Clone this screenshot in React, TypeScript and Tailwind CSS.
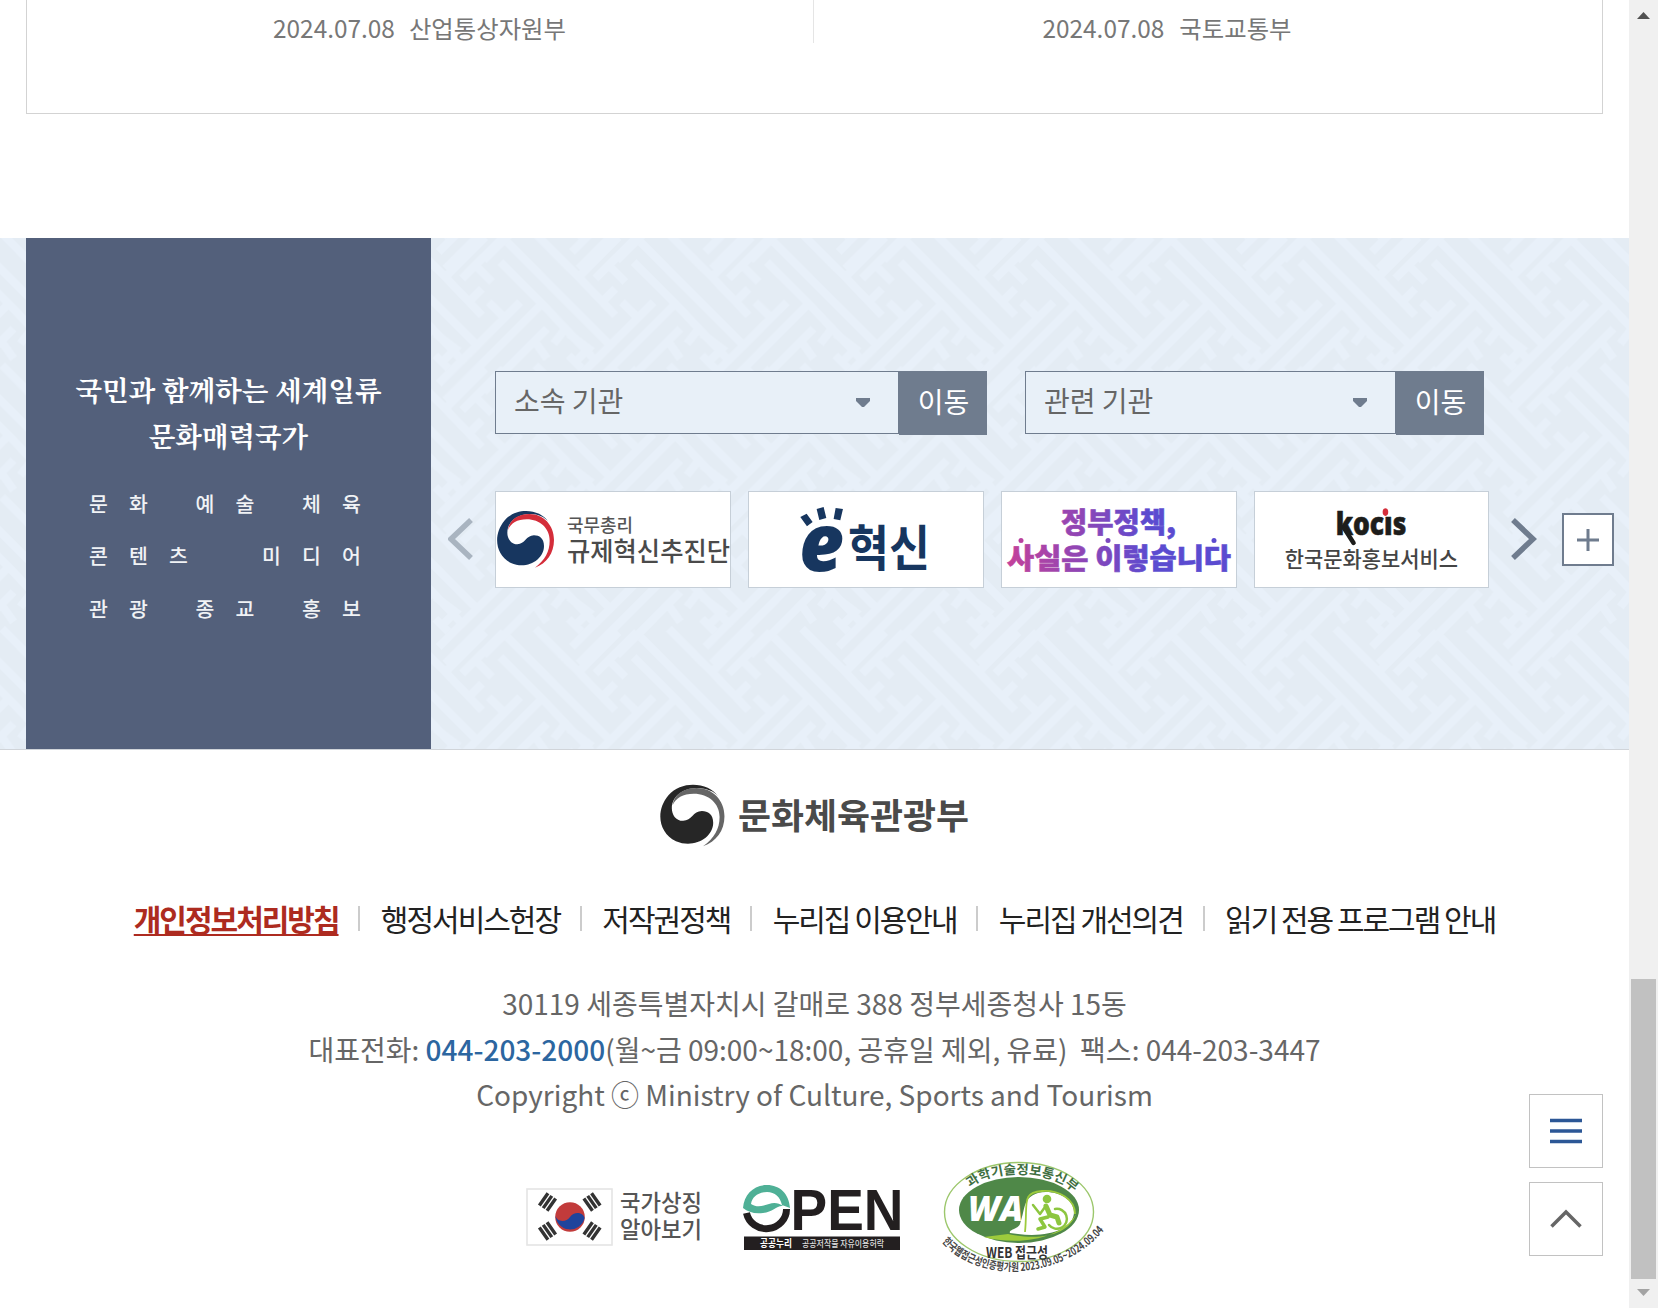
import React from 'react';

const KR = '"Noto Sans CJK KR", sans-serif';

type LabelProps = {
  x: number;
  y: number;
  w: number;
  size: number;
  weight?: number;
  fill?: string;
  italic?: boolean;
  family?: string;
  children: string;
};

/** Logo lettering fitted to an exact width. */
function Label({ x, y, w, size, weight = 700, fill = '#4a4a4a', italic, family = KR, children }: LabelProps) {
  return (
    <text
      x={x}
      y={y}
      textLength={w}
      lengthAdjust="spacingAndGlyphs"
      fontSize={size}
      fontWeight={weight}
      fontStyle={italic ? 'italic' : 'normal'}
      fontFamily={family}
      fill={fill}
    >
      {children}
    </text>
  );
}

const weave =
  'M225 30L530 335 M310 5L440 135L550 250 M440 135L560 15 M90 140L215 15 M130 100L180 150 M150 170L110 210 M205 90L330 215L490 385 M330 215L40 505 M265 210L20 455 M170 210L210 250 M345 290L155 480 M310 330L345 380 M400 290L365 335 M410 370L450 410 M10 305L70 350L25 395';

function Weave() {
  const shifts = [-400, 0, 400];
  return (
    <svg className="absolute inset-0 h-full w-full" aria-hidden="true">
      <defs>
        <pattern id="weave" width="400" height="395" patternUnits="userSpaceOnUse" patternTransform="translate(432 -6) scale(0.3333)">
          <rect width="400" height="395" fill="#e4ecf4" />
          {shifts.map((dx) =>
            [-395, 0, 395].map((dy) => (
              <path key={`${dx}${dy}`} d={weave} transform={`translate(${dx} ${dy})`} fill="none" stroke="#e8f0f9" strokeWidth="25" />
            )),
          )}
        </pattern>
      </defs>
      <rect width="100%" height="100%" fill="url(#weave)" />
    </svg>
  );
}

function Taegeuk({ main, accent }: { main: string; accent: string }) {
  return (
    <>
      <path
        fill={main}
        d="M205 125C182 88 110 78 73 122C38 165 46 226 93 249C140 270 192 240 192 198C192 175 178 166 162 166C138 166 135 193 112 193C92 193 82 175 82 158C82 125 112 102 150 102C175 102 195 112 205 125Z"
      />
      <path
        fill={accent}
        d="M84 150C88 118 115 102 148 102C190 102 222 135 222 180C222 220 200 250 165 263C195 240 209 215 209 182C209 145 180 118 140 118C112 118 92 130 84 150Z"
      />
    </>
  );
}

function Go({ label, width }: { label: string; width: string }) {
  return (
    <div className="flex items-start">
      <div className={`${width} flex h-[63px] items-center justify-between border border-[#6f7c8e] bg-[#e8f0f8] pl-[18px] text-[28px] text-[#666]`}>
        <span className="-mt-[6px]">{label}</span>
        <svg className="mr-[27px]" width="16" height="10" viewBox="0 0 16 10">
          <path d="M1 0H15V3L9 9H7L1 3Z" fill="#6f7c8e" />
        </svg>
      </div>
      <button className="flex h-16 w-[88px] items-center justify-center bg-[#6f7c8e] pb-[5px] pl-px text-[28px] text-white">이동</button>
    </div>
  );
}

function Card({ children }: { children: React.ReactNode }) {
  return (
    <div className="h-[97px] w-[236px] border border-[#c6cfd8] bg-white last:w-[235px]">
      <svg className="max-w-full" width="234" height="95" viewBox="1 1 234 95">
        {children}
      </svg>
    </div>
  );
}

const fields = [
  ['문화', '예술', '체육'],
  ['콘텐츠', '미디어'],
  ['관광', '종교', '홍보'],
];

const links = ['행정서비스헌장', '저작권정책', '누리집 이용안내', '누리집 개선의견', '읽기 전용 프로그램 안내'];

function FlagBadge() {
  const bars: [number, number, number][] = [
    [21.5, 14, -55],
    [66, 14, 55],
    [21.5, 43, 55],
    [66, 43, -55],
  ];
  return (
    <svg width="176" height="60" viewBox="0 0 176 60">
      <rect x="1" y="1" width="85" height="56" fill="#fff" stroke="#e4e4e4" strokeWidth="1.6" />
      {bars.map(([x, y, a]) => (
        <g key={`${x}-${y}`} transform={`translate(${x} ${y}) rotate(${a})`} stroke="#333" strokeWidth="3.4">
          <path d="M-7.500 -4.700H7.500M-7.500 0H7.500M-7.500 4.700H7.500" />
        </g>
      ))}
      <circle cx="44" cy="29" r="14.8" fill="#c23b3b" />
      <path d="M29.4 27C30 34 40 35 44 29C48 23 57 24 58.6 30A14.8 14.8 0 0 1 29.4 27Z" fill="#1f449c" />
      <Label x={94} y={22.5} w={82} size={22.5} weight={500} fill="#555">국가상징</Label>
      <Label x={94} y={50} w={82} size={22.5} weight={500} fill="#555">알아보기</Label>
    </svg>
  );
}

function OpenBadge() {
  return (
    <svg width="157" height="65" viewBox="0 0 157 65">
      <path d="M3.5 28A20.2 19.5 0 0 0 43.5 24" fill="none" stroke="#231f20" strokeWidth="7" />
      <path d="M0 23C1 9 11 0 24 0C37 0 46 9 47 23L39 20C37 12 32 7 24 7C15 7 9 12 8 19C14 23 20 21 26 19C31 17 36 18 40 21C34 20 30 27 20 28C11 29 5 27 0 23Z" fill="#4fb096" />
      <Label x={47.5} y={45} w={113} size={58} weight={700} fill="#231f20" family='"Liberation Sans", sans-serif'>PEN</Label>
      <rect x="1" y="51.5" width="156" height="14" fill="#231f20" />
      <Label x={17} y={62.3} w={32} size={10.5} fill="#fff">공공누리</Label>
      <Label x={59} y={62} w={82} size={9} weight={500} fill="#ddd">공공저작물 자유이용허락</Label>
    </svg>
  );
}

function WaBadge() {
  return (
    <svg className="overflow-visible" width="159" height="112" viewBox="0 0 159 112">
      <defs>
        <path id="arcTop" d="M28 26C48 7 108 7 130 29" />
        <path id="arcBottom" d="M0 80C35 120 118 122 164 66" />
      </defs>
      <ellipse cx="77" cy="50" rx="74.5" ry="49.5" fill="#fff" stroke="#9cc76c" strokeWidth="1.4" />
      <ellipse cx="77" cy="48" rx="60" ry="33" fill="#4f8848" />
      <path d="M78 62C84 44 81 36 96 31C112 27 132 36 132 50C132 67 106 76 76 72L68 71C66 68 76 67 78 62Z" fill="#fff" />
      <path d="M42 75C70 83 118 80 134 52C127 73 98 79 66 72Z" fill="#9dcb3c" />
      <path d="M83 70C86 40 79 31 100 29C117 28 133 37 133 52" fill="none" stroke="#9dcb3c" strokeWidth="1.8" />
      <circle cx="105" cy="37" r="4.300" fill="#8dc63f" />
      <g fill="none" stroke="#8dc63f" strokeWidth="5" strokeLinejoin="round" strokeLinecap="round">
        <path d="M104 44L108 53L115 55L117 61" />
        <path d="M103 45L98 52L91 43" strokeWidth="2.5" />
        <path d="M106 55L98 57L103 65L96 67" strokeWidth="3.5" />
        <path d="M113 47A10 10 0 1 1 107 63" strokeWidth="2.5" />
      </g>
      <Label x={26} y={59} w={55} size={35} weight={800} fill="#fff" italic family='"Open Sans", "Liberation Sans", sans-serif'>WA</Label>
      <text fontSize="13" fontWeight="700" fontFamily={KR} fill="#3f6f42">
        <textPath href="#arcTop" textLength="111" lengthAdjust="spacingAndGlyphs">과학기술정보통신부</textPath>
      </text>
      <Label x={44} y={96} w={62} size={15} fill="#333">WEB 접근성</Label>
      <text fontSize="11" fontWeight="700" fontFamily={KR} fill="#444">
        <textPath href="#arcBottom" textLength="182" lengthAdjust="spacingAndGlyphs">한국웹접근성인증평가원 2023.09.05~2024.09.04</textPath>
      </text>
    </svg>
  );
}

export default function App() {
  return (
    <div className='flex h-[1308px] w-[1658px] overflow-hidden bg-white font-["Noto_Sans_CJK_KR",sans-serif] text-[#666]'>
      <div className="relative flex w-[1629px] flex-col">
        <section className="mx-[26px] flex h-[114px] border border-t-0 border-[#d3d3d3] text-[24.4px] leading-[56px] text-[#777]">
          <div className="flex h-[43px] w-[787px] justify-center gap-[14px] border-r border-[#e5e5e5] pr-px">
            <span>2024.07.08</span>
            <span>산업통상자원부</span>
          </div>
          <div className="flex flex-1 justify-center gap-[15px] pr-[82px]">
            <span>2024.07.08</span>
            <span>국토교통부</span>
          </div>
        </section>

        <section className="relative mt-[124px] h-[512px] border-b border-[#d0d4d9]">
          <Weave />
          <div className="relative flex h-[511px] pl-[26px]">
            <div className="flex w-[405px] flex-col items-center bg-[#53607b] pt-[128px] text-white">
              <p className='text-center font-["Noto_Serif_CJK_KR","Noto_Sans_CJK_KR",serif] text-[27.5px] leading-[46px] font-bold whitespace-nowrap'>
                국민과 함께하는 세계일류
                <br />
                문화매력국가
              </p>
              <div className="mt-[19px] mr-[7px] flex w-[272px] flex-col text-[20.5px] leading-[52.3px] font-medium text-[#f0f2f5]">
                {fields.map((row) => (
                  <div key={row[0]} className="flex justify-between">
                    {row.map((word) => (
                      <span key={word} className="flex gap-[21px]">
                        {word.split('').map((c) => (
                          <span key={c} className="w-[19px]">{c}</span>
                        ))}
                      </span>
                    ))}
                  </div>
                ))}
              </div>
            </div>

            <div className="flex flex-col pt-[133px]">
              <div className="flex gap-[38px] pl-[64px]">
                <Go label="소속 기관" width="w-[404px]" />
                <Go label="관련 기관" width="w-[371px]" />
              </div>
              <div className="mt-[56px] flex items-center pl-[17px]">
                <svg className="-mt-[2px]" width="25" height="42" viewBox="0 0 25 42">
                  <path d="M23 2L3 21L23 40" fill="none" stroke="#a9b4c0" strokeWidth="5.500" />
                </svg>
                <div className="ml-[22px] flex gap-[17px]">
                  <Card>
                    <g transform="translate(-15 -11) scale(0.3333)">
                      <Taegeuk main="#17365f" accent="#d42d3a" />
                    </g>
                    <Label x={72} y={40.5} w={66} size={18.5} weight={500} fill="#555">국무총리</Label>
                    <Label x={72} y={69.5} w={163} size={26} weight={500}>규제혁신추진단</Label>
                  </Card>
                  <Card>
                    <g transform="translate(-268 -11) scale(0.3333)" fill="#17365f">
                      <path d="M961 111L980 101L998 126L981 139ZM1010 87L1031 81L1039 114L1018 120ZM1067 84L1089 87L1081 121L1061 117Z" />
                    </g>
                    <Label x={51} y={80} w={45} size={80} weight={900} fill="#17365f" italic family='"Open Sans", "Liberation Sans", sans-serif'>e</Label>
                    <Label x={100} y={75} w={82} size={49} weight={700} fill="#17365f">혁신</Label>
                  </Card>
                  <Card>
                    <defs>
                      <linearGradient id="policy" gradientUnits="userSpaceOnUse" x1="6" y1="0" x2="150" y2="0">
                        <stop offset="0" stopColor="#c4419a" />
                        <stop offset="1" stopColor="#5b4bd0" />
                      </linearGradient>
                    </defs>
                    <g stroke="url(#policy)" strokeWidth="0.6">
                      <Label x={60} y={42} w={115} size={28} weight={900} fill="url(#policy)">정부정책,</Label>
                      <Label x={6} y={77.5} w={224} size={28} weight={900} fill="url(#policy)">사실은 이렇습니다</Label>
                    </g>
                    <g fill="url(#policy)">
                      <circle cx="20" cy="49.500" r="2.500" />
                      <circle cx="107" cy="49.500" r="2.500" />
                      <circle cx="213" cy="49.500" r="2.500" />
                    </g>
                  </Card>
                  <Card>
                    <g stroke="#1d1d1b" strokeWidth="0.6" strokeLinejoin="round">
                      <Label x={82} y={43.5} w={71} size={32} weight={800} fill="#1d1d1b" family='"Open Sans", "Liberation Sans", sans-serif'>kocıs</Label>
                    </g>
                    <path d="M91 38L100 52" stroke="#1d1d1b" strokeWidth="4.500" strokeLinecap="round" />
                    <ellipse cx="132" cy="21" rx="2.800" ry="3.800" fill="#d42d3a" />
                    <Label x={31} y={76} w={174} size={21.5} weight={500} fill="#444">한국문화홍보서비스</Label>
                  </Card>
                </div>
                <svg className="-mt-[2px] ml-[22px]" width="26" height="42" viewBox="0 0 26 42">
                  <path d="M2 2L22 21L2 40" fill="none" stroke="#6f7c8e" strokeWidth="5.500" />
                </svg>
                <button className="ml-[25px] flex h-[53px] w-[52px] items-center justify-center border-2 border-[#6f7c8e] bg-white">
                  <svg width="22" height="22" viewBox="0 0 22 22">
                    <path d="M11 0V22M0 11H22" stroke="#6f7c8e" strokeWidth="3" />
                  </svg>
                </button>
              </div>
            </div>
          </div>
        </section>

        <footer className="flex flex-col items-center">
          <svg className="mt-[34px]" width="309" height="64" viewBox="0 0 309 64">
            <g transform="translate(-19 -33) scale(0.376 0.362)">
              <Taegeuk main="#262626" accent="#666" />
            </g>
            <Label x={78} y={45} w={231} size={35.5} weight={700}>문화체육관광부</Label>
          </svg>
          <nav className="mt-[48px] flex h-[44px] items-center text-[30px] leading-[44px] tracking-[-2px] whitespace-nowrap text-[#222]">
            <a className="font-bold text-[#ad2b20] underline decoration-2 underline-offset-[3px]">개인정보처리방침</a>
            {links.map((l) => (
              <span key={l} className="flex items-center">
                <i className="mr-[20.5px] ml-[19.8px] h-[25px] w-[2px] bg-[#ccc]" />
                <a>{l}</a>
              </span>
            ))}
          </nav>
          <address className="mt-[41px] text-center text-[28px] leading-[45.6px] whitespace-pre text-[#666] not-italic">
            <p>30119 세종특별자치시 갈매로 388 정부세종청사 15동</p>
            <p>
              대표전화: <b className="font-medium text-[#2c66a0]">044-203-2000</b>(월~금 09:00~18:00, 공휴일 제외, 유료)  팩스: 044-203-3447
            </p>
            <p>Copyright ⓒ Ministry of Culture, Sports and Tourism</p>
          </address>
          <div className="mt-[44px] mr-[2px] flex items-center">
            <FlagBadge />
            <span className="w-[41px]" />
            <OpenBadge />
            <span className="w-[42px]" />
            <WaBadge />
          </div>
        </footer>

        <div className="absolute top-[1094px] right-[26px] flex flex-col gap-[14px]">
          <button className="flex size-[74px] items-center justify-center border border-[#c2c2c2] bg-white">
            <svg width="32" height="26" viewBox="0 0 32 26">
              <path d="M0 2.500H32M0 13H32M0 23.500H32" stroke="#2c5796" strokeWidth="3.500" />
            </svg>
          </button>
          <button className="flex size-[74px] items-center justify-center border border-[#c2c2c2] bg-white">
            <svg width="32" height="20" viewBox="0 0 32 20">
              <path d="M1.500 17.500L16 3L30.500 17.500" fill="none" stroke="#666" strokeWidth="3.500" />
            </svg>
          </button>
        </div>
      </div>

      <div className="flex w-[29px] flex-col items-center bg-[#f0f0f0]">
        <svg className="mt-[12px]" width="13" height="7" viewBox="0 0 13 7">
          <path d="M0 7L6.500 0L13 7Z" fill="#505050" />
        </svg>
        <div className="mt-[960px] h-[300px] w-[25px] bg-[#c1c1c1]" />
        <svg className="mt-[10px]" width="13" height="7" viewBox="0 0 13 7">
          <path d="M0 0L6.500 7L13 0Z" fill="#a3a3a3" />
        </svg>
      </div>
    </div>
  );
}
